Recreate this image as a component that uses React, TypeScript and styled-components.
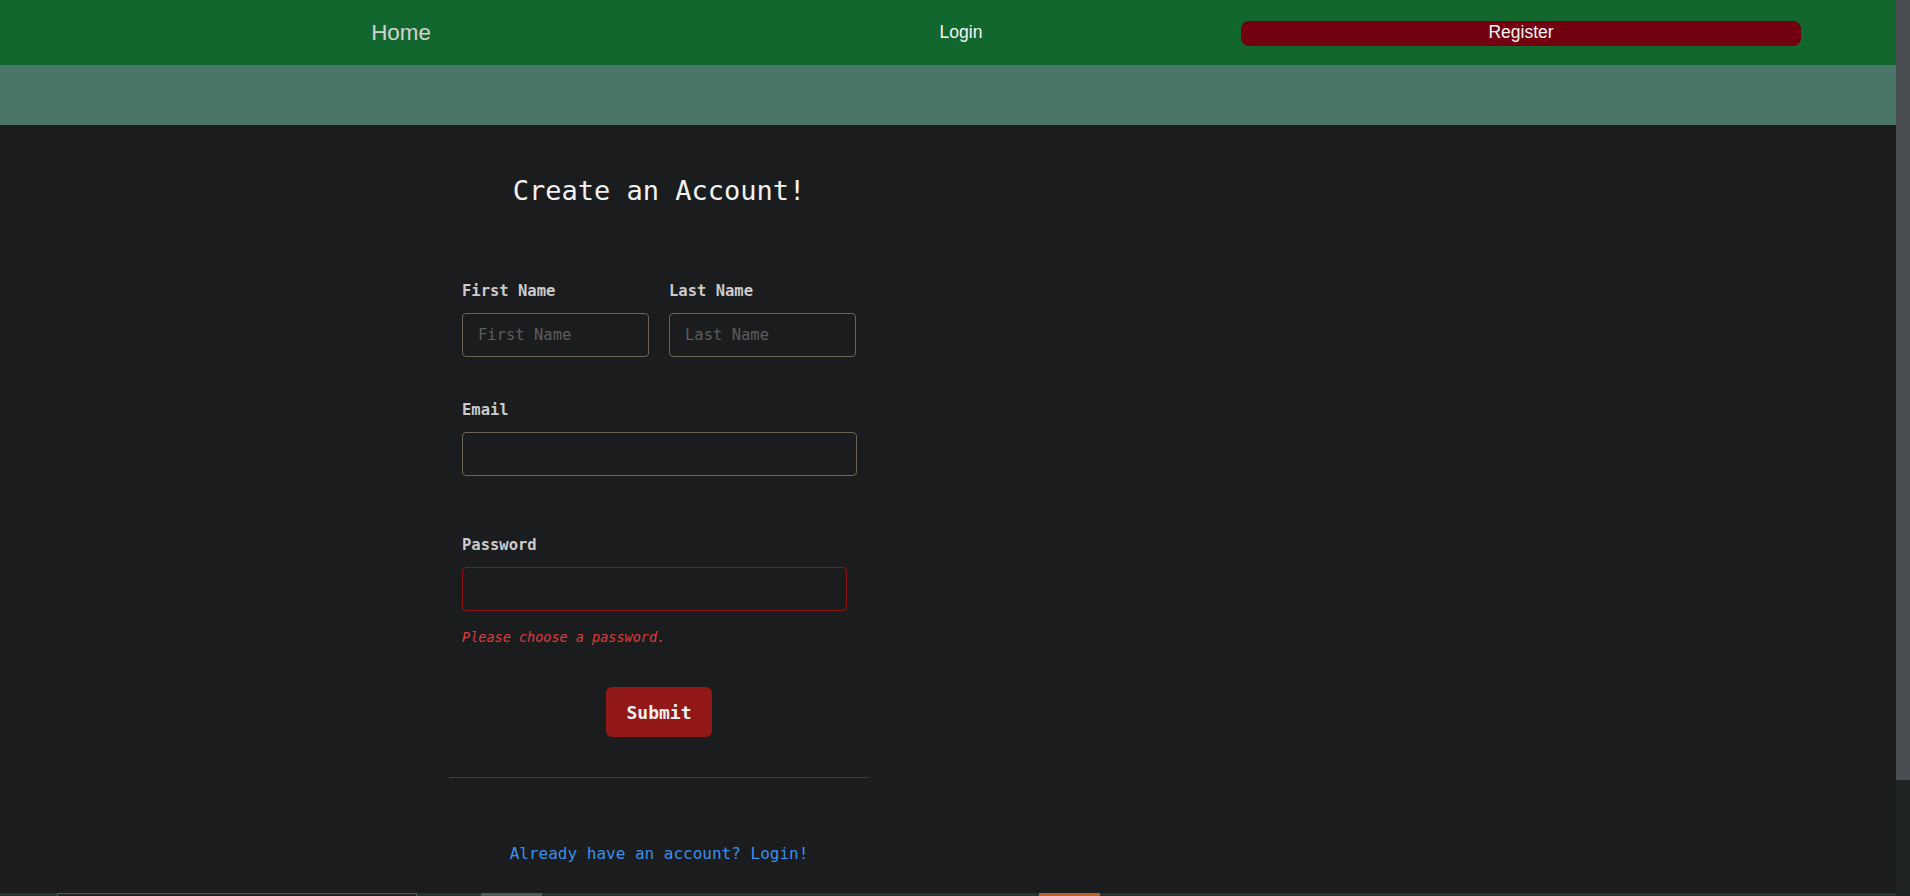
import styled, { createGlobalStyle } from 'styled-components';

const GlobalStyle = createGlobalStyle`
  html, body {
    margin: 0;
    padding: 0;
    overflow: hidden;
    background: #1b1c1e;
  }

  * {
    box-sizing: border-box;
  }
`;

const mono = `"DejaVu Sans Mono", "Liberation Mono", monospace`;
const sans = `"Liberation Sans", Arial, sans-serif`;

export default function App() {
  return (
    <>
      <GlobalStyle />
      <Shell>
        <Page>
          <NavBar>
            <NavCell>
              <Brand>Home</Brand>
            </NavCell>
            <NavCell>
              <NavLink>Login</NavLink>
            </NavCell>
            <NavCell>
              <RegisterButton>Register</RegisterButton>
            </NavCell>
          </NavBar>
          <SubBand />

          <Main>
            <FormColumn>
              <Heading>Create an Account!</Heading>

              <NameRow>
                <Field>
                  <Label>First Name</Label>
                  <Input placeholder="First Name" />
                </Field>
                <Field>
                  <Label>Last Name</Label>
                  <Input placeholder="Last Name" />
                </Field>
              </NameRow>

              <Field $top={42}>
                <Label>Email</Label>
                <Input type="email" />
              </Field>

              <Field $top={58}>
                <Label>Password</Label>
                <Input type="password" $invalid />
                <ErrorText>Please choose a password.</ErrorText>
              </Field>

              <SubmitRow>
                <SubmitButton type="button">Submit</SubmitButton>
              </SubmitRow>

              <Divider />

              <LoginLink href="#">Already have an account? Login!</LoginLink>
            </FormColumn>
          </Main>

          <Footer>
            <FooterBox />
            <FooterChip $color="#4b5b5b" $left={481} />
            <FooterChip $color="#b5632a" $left={1039} />
          </Footer>
        </Page>

        {/* page scrollbar */}
        <ScrollRail>
          <ScrollThumb />
        </ScrollRail>
      </Shell>
    </>
  );
}

const Shell = styled.div`
  display: flex;
  height: 100vh;
`;

const Page = styled.div`
  flex: 1;
  min-width: 0;
  overflow-y: auto;
  overflow-x: hidden;
  scrollbar-width: none;

  &::-webkit-scrollbar {
    display: none;
  }
`;

const ScrollRail = styled.div`
  width: 14px;
  flex-shrink: 0;
  background: #202324;
`;

const ScrollThumb = styled.div`
  height: 780px;
  background: #474d50;
`;

const NavBar = styled.nav`
  display: flex;
  height: 65px;
  padding-left: 121px;
  background: #12672f;
`;

const NavCell = styled.div`
  width: 560px;
  display: flex;
  align-items: center;
  justify-content: center;
`;

const Brand = styled.a`
  font-family: ${sans};
  font-size: 22.4px;
  color: #d2d2d2;
  margin-top: 1px;
`;

const NavLink = styled.a`
  font-family: ${sans};
  font-size: 17.5px;
  color: #f4f4f4;
`;

const RegisterButton = styled.button`
  width: 560px;
  height: 25px;
  margin-top: 1px;
  border: none;
  border-radius: 8px;
  background: #720010;
  color: #f4f4f4;
  font-family: ${sans};
  font-size: 17.5px;
  line-height: 23px;
  padding: 0 0 2px;
`;

const SubBand = styled.div`
  height: 60px;
  background: #4a7667;
`;

const Main = styled.main`
  padding-left: 449px;
`;

const FormColumn = styled.form`
  width: 420px;
  padding-top: 50px;
  display: flex;
  flex-direction: column;
`;

const Heading = styled.h1`
  margin: 0;
  font-family: ${mono};
  font-weight: normal;
  font-size: 27px;
  line-height: 32px;
  color: #f2f2f2;
  text-align: center;
`;

const NameRow = styled.div`
  display: flex;
  gap: 20px;
  padding: 0 13px;
  margin-top: 73px;
`;

const Field = styled.div<{ $top?: number }>`
  display: flex;
  flex-direction: column;
  flex: 1;
  margin-top: ${(p) => (p.$top ? `${p.$top}px` : '0')};
  padding: ${(p) => (p.$top ? '0 12px 0 13px' : '0')};
`;

const Label = styled.label`
  padding-top: 1px;
  font-family: ${mono};
  font-weight: bold;
  font-size: 15.5px;
  line-height: 20px;
  color: #cbcbcb;
  margin-bottom: 12px;
`;

const Input = styled.input<{ $invalid?: boolean }>`
  height: 44px;
  width: ${(p) => (p.$invalid ? '385px' : '100%')};
  padding: 0 15px;
  background: #1b1c1e;
  border: 1px solid ${(p) => (p.$invalid ? '#8e1010' : '#6b6558')};
  border-radius: 4px;
  font-family: ${mono};
  font-size: 15.5px;
  color: #e0e0e0;
  outline: none;

  &::placeholder {
    color: #5c5c5c;
  }
`;

const ErrorText = styled.div`
  margin-top: 17px;
  font-family: ${mono};
  font-style: italic;
  font-size: 13.5px;
  line-height: 18px;
  color: #e03a3a;
`;

const SubmitRow = styled.div`
  display: flex;
  justify-content: center;
  margin-top: 41px;
`;

const SubmitButton = styled.button`
  width: 106px;
  height: 50px;
  border: none;
  border-radius: 6px;
  background: #931818;
  color: #f0f0f0;
  font-family: ${mono};
  font-weight: bold;
  font-size: 18px;
`;

const Divider = styled.hr`
  margin: 40px 0 0;
  border: none;
  border-top: 1px solid #3f3f3f;
`;

const LoginLink = styled.a`
  margin-top: 66px;
  font-family: ${mono};
  font-size: 16px;
  line-height: 20px;
  color: #3b8fea;
  text-align: center;
  text-decoration: none;
`;

const Footer = styled.footer`
  position: relative;
  margin-top: 29px;
  height: 135px;
  background: #243433;
`;

const FooterBox = styled.div`
  position: absolute;
  left: 57px;
  top: 0;
  width: 360px;
  height: 90px;
  border: 1px solid #5a5a5a;
  background: #1e2424;
`;

const FooterChip = styled.div<{ $color: string; $left: number }>`
  position: absolute;
  top: 0;
  left: ${(p) => p.$left}px;
  width: 61px;
  height: 30px;
  background: ${(p) => p.$color};
`;
